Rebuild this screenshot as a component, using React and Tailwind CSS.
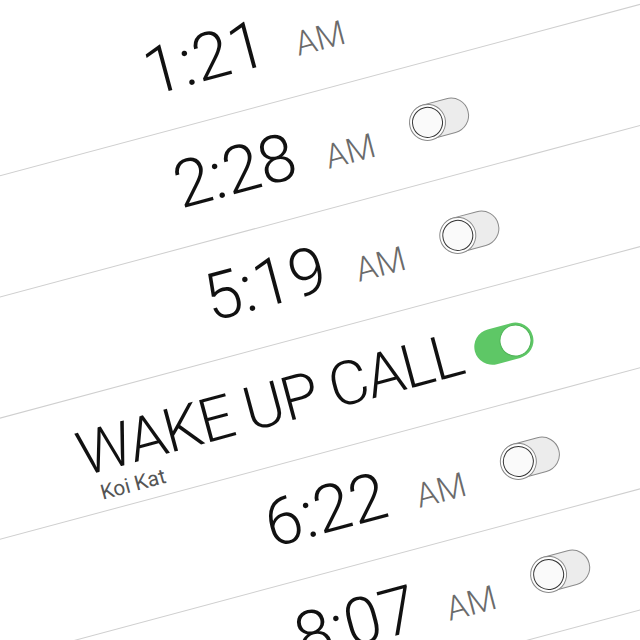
const alarms = [
  { time: '1:21' },
  { time: '2:28', toggle: 'off' },
  { time: '5:19', toggle: 'off' },
  { label: 'WAKE UP CALL', sub: 'Koi Kat', toggle: 'on' },
  { time: '6:22', toggle: 'off' },
  { time: '8:07', toggle: 'off' },
];

const Toggle = ({ on }) =>
  on ? (
    <div className="w-[60px] h-[36px] rounded-full bg-[#5ec766] flex items-center justify-end p-[2px]">
      <div className="w-[32px] h-[32px] rounded-full bg-white border border-[#4fb457]" />
    </div>
  ) : (
    <div className="w-[60px] h-[36px] rounded-full bg-[#ececec] border border-[#8a8a8a] flex items-center p-[1px]">
      <div className="w-[31px] h-[31px] rounded-full bg-[#fafafa] border-[1.5px] border-[#333] shadow-[0_0_0_2px_#fff,0_0_0_3px_#8a8a8a]" />
    </div>
  );

const AlarmRow = ({ alarm }) => {
  if (alarm.label) {
    return (
      <div className="h-[117px] border-b border-[#cfcfcf] flex items-center">
        <div className="ml-[138px] w-[410px] self-start mt-[26px] flex flex-col">
          <span className="text-[61px] leading-none tracking-[-0.025em] font-light text-[#111] whitespace-nowrap">
            {alarm.label}
          </span>
          <span className="ml-[12px] mt-[1px] text-[21px] leading-none text-[#555]">{alarm.sub}</span>
        </div>
        <Toggle on />
      </div>
    );
  }

  return (
    <div className="h-[117px] border-b border-[#cfcfcf] flex items-center">
      <div className="ml-[301px] mb-[5px] flex items-baseline">
        <span className="w-[153px] text-[66px] leading-none font-light text-[#111]">{alarm.time}</span>
        <span className="w-[90px] text-[34px] leading-none font-light text-[#6b6b6b]">AM</span>
      </div>
      {alarm.toggle && <Toggle on={alarm.toggle === 'on'} />}
    </div>
  );
};

export default function App() {
  return (
    <div className="w-[640px] h-[640px] overflow-hidden bg-white font-['Roboto','Liberation_Sans',sans-serif]">
      {/* the list is photographed at an angle: one rotated sheet */}
      <div className="w-[820px] pt-[53px] origin-top-left translate-x-[-174px] translate-y-[47px] rotate-[-15deg]">
        {alarms.map((a, i) => (
          <AlarmRow key={i} alarm={a} />
        ))}
      </div>
    </div>
  );
}
